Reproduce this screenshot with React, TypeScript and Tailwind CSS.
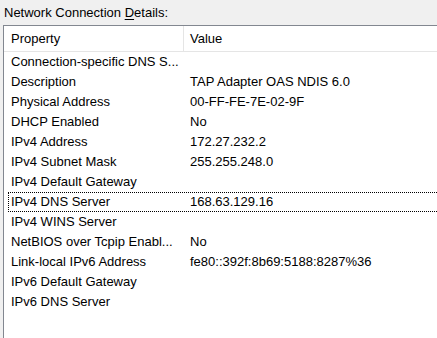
import React from 'react';

const rows: [string, string][] = [
  ['Connection-specific DNS S...', ''],
  ['Description', 'TAP Adapter OAS NDIS 6.0'],
  ['Physical Address', '00-FF-FE-7E-02-9F'],
  ['DHCP Enabled', 'No'],
  ['IPv4 Address', '172.27.232.2'],
  ['IPv4 Subnet Mask', '255.255.248.0'],
  ['IPv4 Default Gateway', ''],
  ['IPv4 DNS Server', '168.63.129.16'],
  ['IPv4 WINS Server', ''],
  ['NetBIOS over Tcpip Enabl...', 'No'],
  ['Link-local IPv6 Address', 'fe80::392f:8b69:5188:8287%36'],
  ['IPv6 Default Gateway', ''],
  ['IPv6 DNS Server', ''],
];

const App: React.FC = () => {
  const selected = 7;

  return (
    <div className="w-[437px] h-[338px] overflow-hidden bg-[#f0f0f0] text-[13px] text-black flex flex-col font-['Liberation_Sans',Arial,sans-serif]">
      {/* Label */}
      <div className="h-[25px] pl-[4px] pt-[6px] leading-[13px] whitespace-pre">
        Network Connection <span className="underline underline-offset-2">D</span>etails:
      </div>

      {/* List view */}
      <div className="flex-1 ml-[3px] w-[460px] bg-white border-l border-t border-[#828790] flex flex-col">
        {/* Header */}
        <div className="h-[26px] flex border-b border-[#e5e5e5]">
          <div className="w-[180px] pl-[7px] flex items-center border-r border-[#e5e5e5]">Property</div>
          <div className="flex-1 pl-[6px] flex items-center">Value</div>
        </div>

        {/* Rows */}
        {rows.map(([prop, value], i) => (
          <div
            key={prop}
            className={`h-[20px] flex items-center ml-[4px] ${
              i === selected ? 'border border-dotted border-black' : 'border border-transparent'
            }`}
          >
            <div className="w-[175px] pl-[2px] whitespace-nowrap overflow-hidden">{prop}</div>
            <div className="flex-1 pl-[6px] whitespace-nowrap">{value}</div>
          </div>
        ))}
      </div>
    </div>
  );
};

export default App;
